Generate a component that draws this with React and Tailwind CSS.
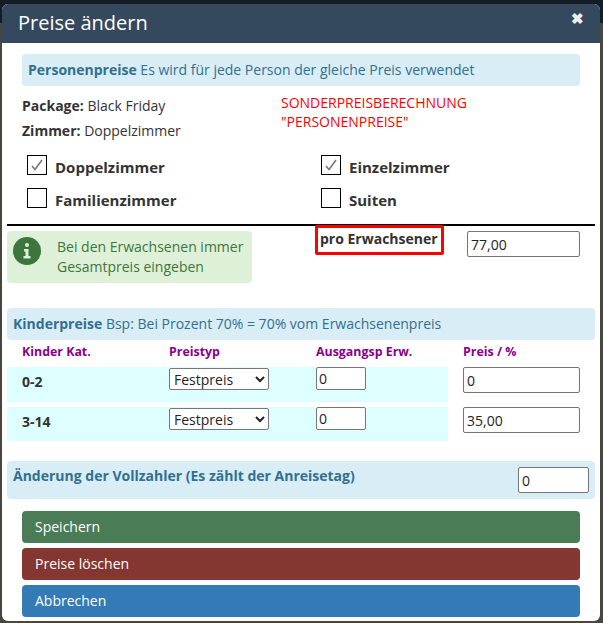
import React from 'react';

const Room = ({ label, checked }) => (
    <div className="flex items-center h-[33px]">
        <span className="w-5 h-5 ml-[5px] border border-black bg-white flex items-center justify-center shrink-0 -mt-1.5">
            {checked && (
                <svg width="14" height="14" viewBox="0 0 14 14" fill="none">
                    <path d="M2 8 L5 11.5 L12 2" stroke="#777777" strokeWidth="1.6" />
                </svg>
            )}
        </span>
        <span className="ml-2 text-[15px] font-bold text-[#333333]">{label}</span>
    </div>
);

const Field = ({ value, className }) => (
    <input
        type="text"
        defaultValue={value}
        className={`block border border-[#767676] rounded-[2px] bg-white px-[3px] text-[14px] font-normal leading-none text-[#222222] outline-none ${className}`}
    />
);

const ChildRow = ({ label, price, className }) => (
    <div className={`flex ${className}`}>
        <div className="w-[441px] bg-[#ddffff] grid grid-cols-[147px_147px_147px] pl-[15px]">
            <div className="pt-1 text-[14px] font-bold text-[#333333]">{label}</div>
            <div>
                <select className="block w-[100px] h-[22px] mt-px border border-[#767676] rounded-[2px] bg-white text-[14px] text-[#222222] outline-none">
                    <option>Festpreis</option>
                </select>
            </div>
            <div>
                <Field value="0" className="w-[50px] h-[23px] pl-[2px]" />
            </div>
        </div>
        <div className="ml-[15px]">
            <Field value={price} className="w-[117px] h-[26px]" />
        </div>
    </div>
);

const ActionButton = ({ label, className }) => (
    <button className={`block w-full h-8 rounded-[4px] px-[13px] pb-[2px] text-left text-[14px] text-white ${className}`}>{label}</button>
);

export default function App() {
    return (
        <div className="w-[603px] h-[623px] overflow-hidden bg-[#4a4a48] bg-[linear-gradient(#141c26_0,#141c26_23px,#47473f_23px)] pt-1 pl-0.5 font-['Open_Sans',sans-serif] text-[14px] text-[#333333]">
            <div className="w-[598px] h-[617px] rounded-md bg-white overflow-hidden">
                <div className="h-[39px] bg-[#34495e] pl-4 pr-[16px] flex justify-between">
                    <h2 className="text-[20px] leading-[37px] text-white">Preise ändern</h2>
                    <span className="text-[15px] leading-[28px] font-bold text-[#eeeeee]">✖</span>
                </div>

                <div className="px-[5px] pt-[11px]">
                    <div className="mx-[15px] h-8 rounded-[4px] bg-[#d9edf7] px-1.5 leading-8 text-[#31708f]">
                        <b>Personenpreise</b> Es wird für jede Person der gleiche Preis verwendet
                    </div>

                    <div className="mx-[15px] h-[58px] mt-[7px] grid grid-cols-[259px_1fr]">
                        <div className="leading-[25px]">
                            <div><b>Package:</b> Black Friday</div>
                            <div><b>Zimmer:</b> Doppelzimmer</div>
                        </div>
                        <div className="text-[14px] leading-[19px] text-[#ff0000]">
                            SONDERPREISBERECHNUNG<br />"PERSONENPREISE"
                        </div>
                    </div>

                    <div className="mx-[15px] pb-[7px] grid grid-cols-[294px_1fr]">
                        <Room label="Doppelzimmer" checked />
                        <Room label="Einzelzimmer" checked />
                        <Room label="Familienzimmer" />
                        <Room label="Suiten" />
                    </div>

                    <div className="border-t-2 border-black"></div>

                    <div className="flex h-[82px]">
                        <div className="w-[245px] h-[52px] mt-[5px] rounded-[4px] bg-[#dff0d8] flex text-[#3c763d]">
                            <span className="w-7 h-7 mt-1.5 ml-1.5 rounded-full bg-[#3c763d] flex items-center justify-center shrink-0">
                                <svg width="8" height="16" viewBox="0 0 8 16" fill="#dff0d8">
                                    <circle cx="4" cy="2" r="2" />
                                    <path d="M1 6 H5.5 V13 H7.5 V15.5 H0.5 V13 H2.5 V8.5 H1 Z" />
                                </svg>
                            </span>
                            <div className="ml-[16px] pt-1.5 leading-5">Bei den Erwachsenen immer<br />Gesamtpreis eingeben</div>
                        </div>
                        <div className="w-[129px] h-[30px] ml-[63px] -mt-[1px] border-[3px] border-[#ff0000] rounded-[2px] pl-0.5 text-[14px] leading-[22px] font-bold">
                            pro Erwachsener
                        </div>
                        <Field value="77,00" className="w-[113px] h-[26px] ml-[23px] mt-[5px]" />
                    </div>

                    <div className="h-8 rounded-[4px] bg-[#d9edf7] px-1.5 leading-8 text-[#31708f]">
                        <b>Kinderpreise</b> Bsp: Bei Prozent 70% = 70% vom Erwachsenenpreis
                    </div>

                    <div className="h-[27px] pl-[15px] grid grid-cols-[147px_147px_147px_1fr] pt-[4px] text-[12.4px] leading-[16px] font-bold text-[#8b008b]">
                        <div>Kinder Kat.</div>
                        <div>Preistyp</div>
                        <div>Ausgangsp Erw.</div>
                        <div>Preis / %</div>
                    </div>

                    <ChildRow label="0-2" price="0" className="h-[35px]" />
                    <ChildRow label="3-14" price="35,00" className="h-[34px] mt-[5px]" />

                    <div className="mt-5 h-[38px] rounded-[4px] bg-[#d9edf7] pl-1.5 pr-1.5 flex justify-between font-bold text-[#31708f]">
                        <span className="pt-[5px] leading-5">Änderung der Vollzahler (Es zählt der Anreisetag)</span>
                        <Field value="0" className="w-[71px] h-[26px] mt-1.5" />
                    </div>

                    <div className="mx-[15px] mt-3 flex flex-col gap-[5px]">
                        <ActionButton label="Speichern" className="bg-[#4a7c55]" />
                        <ActionButton label="Preise löschen" className="bg-[#843630]" />
                        <ActionButton label="Abbrechen" className="bg-[#337ab7]" />
                    </div>
                </div>
            </div>
        </div>
    );
}
